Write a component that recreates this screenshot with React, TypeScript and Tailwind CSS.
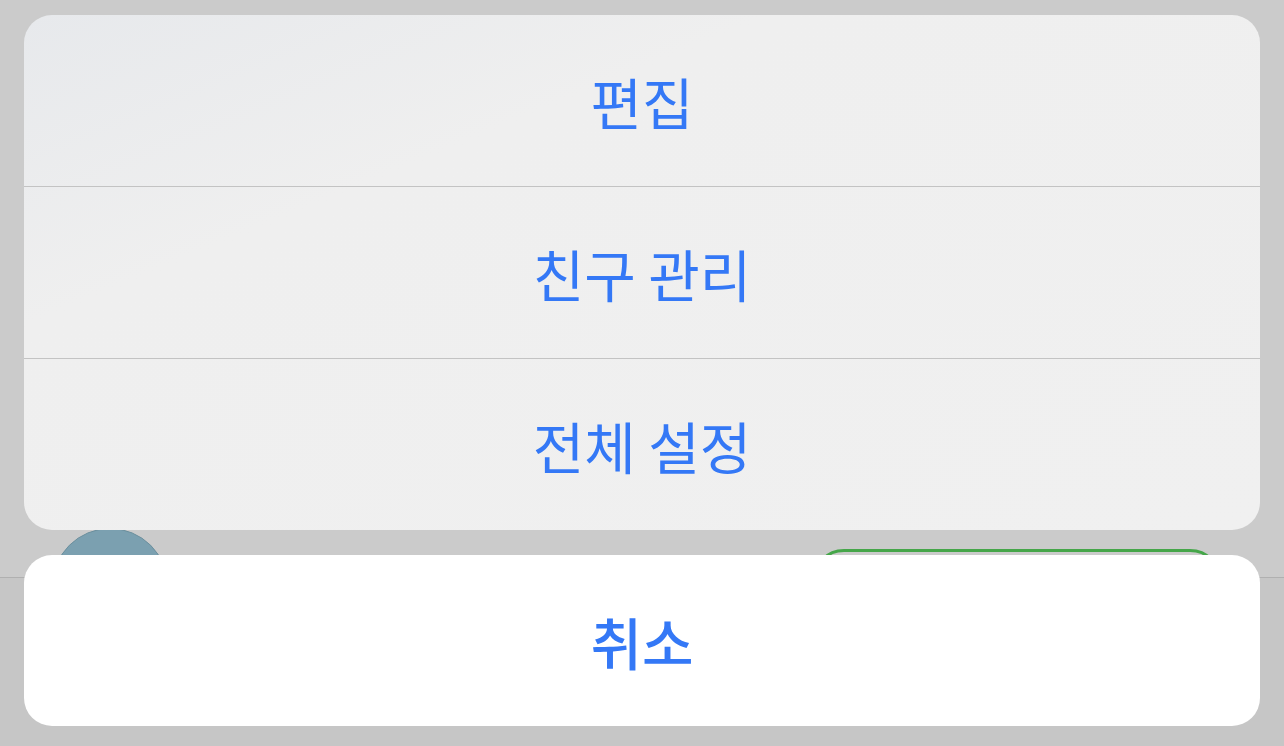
import React from 'react';

const font = { fontFamily: '"Noto Sans CJK KR", "Noto Sans", sans-serif' };

const SheetRow = ({ label }: { label: string }) => (
  <button className="h-[171px] w-full flex items-center justify-center text-[56px] leading-none text-[#3478f6] font-normal">
    {label}
  </button>
);

export default function App() {
  return (
    <div className="relative w-[1284px] h-[746px] overflow-hidden bg-[#c6c6c6]" style={font}>
      {/* dimmed page behind the sheet */}
      <div className="h-[578px] bg-[#cbcbcb] border-b border-[#b0b0b0]">
        <div className="flex items-start justify-between pt-[528px] pl-[52px] pr-[62px]">
          <div className="w-[116px] h-[116px] rounded-full bg-[#7ba0b0] border border-[#6b8f9d]" />
          <div className="mt-[21px] w-[410px] h-[64px] rounded-full border-[3px] border-[#45a649]" />
        </div>
      </div>

      {/* action sheet */}
      <div className="absolute inset-0 flex flex-col px-6 pt-[15px] gap-[25px]">
        <div className="rounded-[28px] overflow-hidden bg-gradient-to-br from-[#e7e9ec] via-[#efefef] via-30% to-[#f0f0f0] flex flex-col">
          <SheetRow label="편집" />
          <div className="h-px bg-[#c3c3c3]" />
          <SheetRow label="친구 관리" />
          <div className="h-px bg-[#c3c3c3]" />
          <SheetRow label="전체 설정" />
        </div>
        <button className="h-[171px] rounded-[28px] bg-white flex items-center justify-center text-[56px] leading-none text-[#3478f6] font-medium">
          취소
        </button>
      </div>
    </div>
  );
}
